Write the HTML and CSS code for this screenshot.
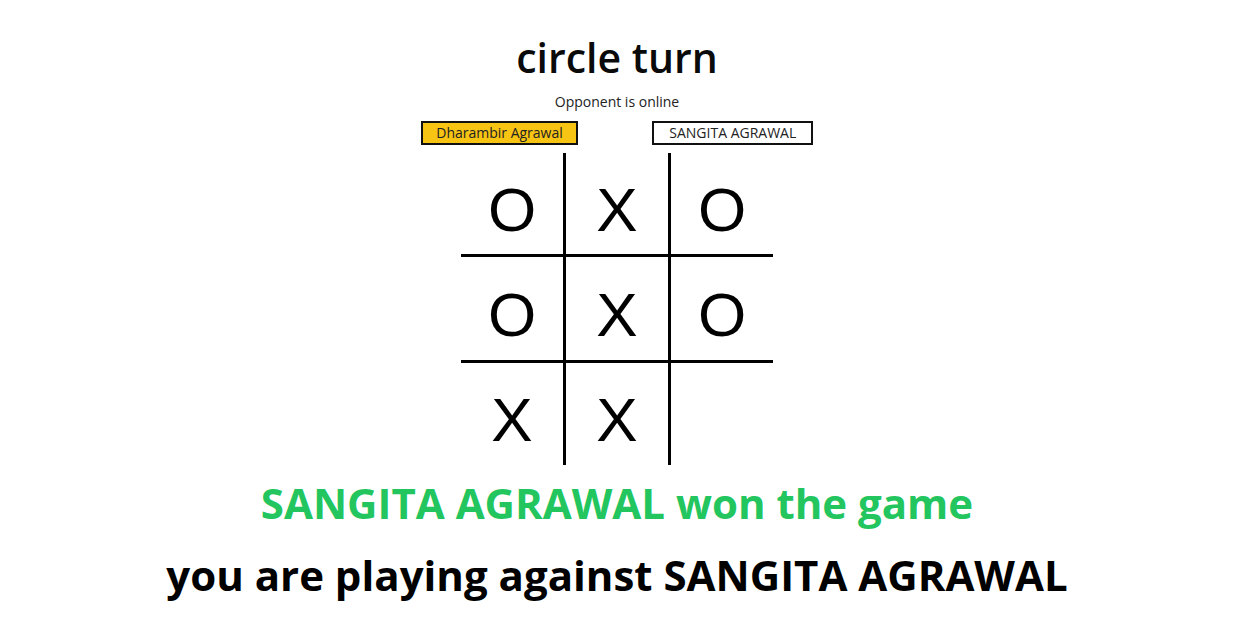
FILE: index.html
```html
<!DOCTYPE html>
<html lang="en">
<head>
	<meta charset="UTF-8">
	<title>Tic Tac Toe</title>
	<link rel="stylesheet" href="styles.css">
</head>
<body>
	<div class="game">
		<h1 class="turn">circle turn</h1>
		<p class="status">Opponent is online</p>
		<div class="players">
			<div class="player active">Dharambir Agrawal</div>
			<div class="player">SANGITA AGRAWAL</div>
		</div>
		<div class="board">
			<div class="cell">O</div>
			<div class="cell">X</div>
			<div class="cell">O</div>
			<div class="cell">O</div>
			<div class="cell">X</div>
			<div class="cell">O</div>
			<div class="cell">X</div>
			<div class="cell">X</div>
			<div class="cell"></div>
		</div>
		<h2 class="result">SANGITA AGRAWAL won the game</h2>
		<h2 class="against">you are playing against SANGITA AGRAWAL</h2>
	</div>
</body>
</html>
```

FILE: styles.css
```css
body{
	margin: 0;
	font-family: "Open Sans", "Noto Sans", sans-serif;
	background: #fff;
	color: #000;
}
.game{
	display: flex;
	flex-direction: column;
	align-items: center;
}
.turn{
	font-size: 41px;
	font-weight: 600;
	margin: 30px 0 0;
	line-height: 54px;
	color: #0a0a0a;
}
.status{
	font-size: 14px;
	color: #222;
	margin: 8px 0 0;
	line-height: 19px;
}
.players{
	display: flex;
	gap: 74px;
	margin-top: 10px;
}
.player{
	border: 2px solid #111;
	height: 20px;
	line-height: 20px;
	padding: 0 15px;
	font-size: 14px;
	color: #222;
}
.player.active{
	background: #f8c414;
	padding: 0 13.5px;
}
.board{
	display: grid;
	grid-template-columns: 105px 105px 102px;
	grid-template-rows: 104px 106px 102px;
	margin-top: 8px;
}
.cell{
	box-sizing: border-box;
	display: flex;
	align-items: center;
	justify-content: center;
	padding-top: 11px;
	font-family: "Liberation Sans", Arial, sans-serif;
	font-size: 62px;
}
.cell:nth-child(3n+1), .cell:nth-child(3n+2){
	border-right: 3px solid #000;
}
.cell:nth-child(-n+6){
	border-bottom: 3px solid #000;
}
.result{
	font-size: 42px;
	font-weight: 700;
	color: #22c55e;
	margin: 10px 0 0;
	line-height: 56px;
}
.against{
	font-size: 42px;
	font-weight: 700;
	margin: 16px 0 0;
	line-height: 56px;
}
```
